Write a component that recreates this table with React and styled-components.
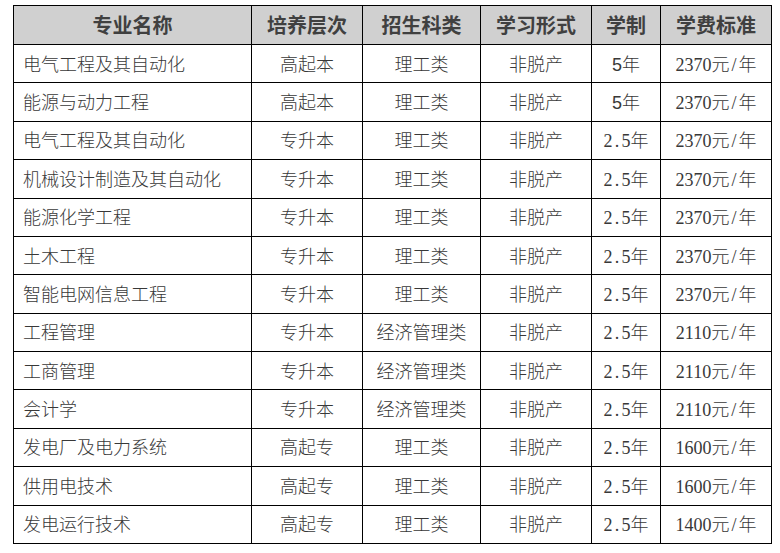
import React from "react";
import styled, { createGlobalStyle } from "styled-components";

const GlobalStyle = createGlobalStyle`
  html, body { margin: 0; padding: 0; background: #ffffff; }
  body { font-family: "Liberation Serif", "Noto Sans CJK SC", serif; }
`;

const Page = styled.div`
  padding: 5px 0 0 13px;
  width: 780px;
  height: 553px;
  box-sizing: border-box;
`;

const Table = styled.table`
  width: 758px;
  border-collapse: collapse;
  table-layout: fixed;
  color: #333333;
`;

const HeadCell = styled.th`
  height: 38px;
  padding: 0;
  border: 1px solid #000000;
  background: #d0d0d0;
  color: #404040;
  font-family: "Noto Sans CJK SC", sans-serif;
  font-weight: 700;
  font-size: 20px;
  line-height: 20px;
  text-align: center;
  vertical-align: middle;
`;

const Row = styled.tr`
  height: 38.38px;
`;

const Cell = styled.td`
  padding: 0 0 0 ${(p) => (p.$left ? "9px" : "0")};
  border: 1px solid #000000;
  font-family: "Liberation Serif", "Noto Sans CJK SC", serif;
  font-weight: 400;
  font-size: 18px;
  line-height: 20px;
  color: #383838;
  text-align: ${(p) => (p.$left ? "left" : "center")};
  vertical-align: middle;
  white-space: nowrap;
`;

const Han = styled.span`
  font-family: "Noto Sans CJK SC", sans-serif;
  font-weight: 300;
`;

const Digits = styled.span`
  font-family: ${(p) => (p.$sans ? '"Liberation Sans"' : '"Liberation Serif"')}, serif;
`;

const Narrow = styled.span`
  display: inline-block;
  width: 9px;
  text-align: center;
`;

const columns = [
  { label: "专业名称", width: 238 },
  { label: "培养层次", width: 111 },
  { label: "招生科类", width: 118 },
  { label: "学习形式", width: 111 },
  { label: "学制", width: 69 },
  { label: "学费标准", width: 111 },
];

const rows = [
  ["电气工程及其自动化", "高起本", "理工类", "非脱产", "5", "2370"],
  ["能源与动力工程", "高起本", "理工类", "非脱产", "5", "2370"],
  ["电气工程及其自动化", "专升本", "理工类", "非脱产", "2.5", "2370"],
  ["机械设计制造及其自动化", "专升本", "理工类", "非脱产", "2.5", "2370"],
  ["能源化学工程", "专升本", "理工类", "非脱产", "2.5", "2370"],
  ["土木工程", "专升本", "理工类", "非脱产", "2.5", "2370"],
  ["智能电网信息工程", "专升本", "理工类", "非脱产", "2.5", "2370"],
  ["工程管理", "专升本", "经济管理类", "非脱产", "2.5", "2110"],
  ["工商管理", "专升本", "经济管理类", "非脱产", "2.5", "2110"],
  ["会计学", "专升本", "经济管理类", "非脱产", "2.5", "2110"],
  ["发电厂及电力系统", "高起专", "理工类", "非脱产", "2.5", "1600"],
  ["供用电技术", "高起专", "理工类", "非脱产", "2.5", "1600"],
  ["发电运行技术", "高起专", "理工类", "非脱产", "2.5", "1400"],
];

function Duration({ value }) {
  if (value.includes(".")) {
    const [a, b] = value.split(".");
    return (
      <>
        <Digits>{a}</Digits>
        <Narrow>.</Narrow>
        <Digits>{b}</Digits>
        <Han>年</Han>
      </>
    );
  }
  return (
    <>
      <Digits $sans>{value}</Digits>
      <Han>年</Han>
    </>
  );
}

function Fee({ amount }) {
  return (
    <>
      <Digits>{amount}</Digits>
      <Han>元</Han>
      <Narrow>/</Narrow>
      <Han>年</Han>
    </>
  );
}

export default function App() {
  return (
    <>
      <GlobalStyle />
      <Page>
        <Table>
          <colgroup>
            {columns.map((c) => (
              <col key={c.label} style={{ width: c.width }} />
            ))}
          </colgroup>
          <thead>
            <tr>
              {columns.map((c) => (
                <HeadCell key={c.label}>{c.label}</HeadCell>
              ))}
            </tr>
          </thead>
          <tbody>
            {rows.map((r, i) => (
              <Row key={i}>
                <Cell $left>
                  <Han>{r[0]}</Han>
                </Cell>
                <Cell>
                  <Han>{r[1]}</Han>
                </Cell>
                <Cell>
                  <Han>{r[2]}</Han>
                </Cell>
                <Cell>
                  <Han>{r[3]}</Han>
                </Cell>
                <Cell>
                  <Duration value={r[4]} />
                </Cell>
                <Cell>
                  <Fee amount={r[5]} />
                </Cell>
              </Row>
            ))}
          </tbody>
        </Table>
      </Page>
    </>
  );
}
